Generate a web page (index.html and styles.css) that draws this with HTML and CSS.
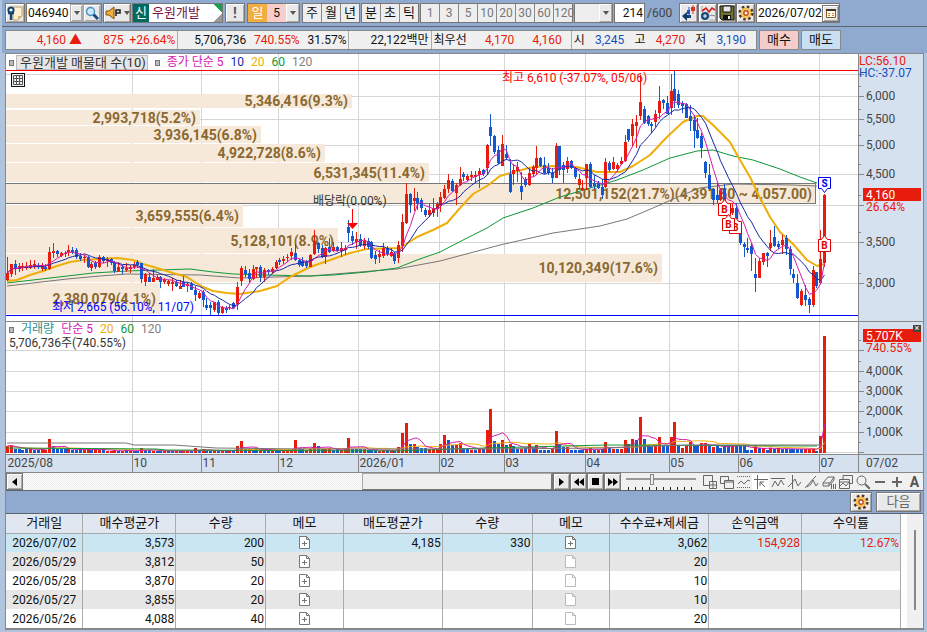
FILE: index.html
```html
<!DOCTYPE html>
<html lang="ko">
<head>
    <meta charset="UTF-8">
    <meta name="viewport" content="width=device-width,initial-scale=1" />
    <title>우원개발 차트</title>
    <link rel="stylesheet" href="styles.css">
</head>
<body>
<div class="top">
    <div class="toolbar">
        <button class="btn" type="button" aria-label="고정">
            <svg width="16" height="16" viewBox="0 0 16 16"><path d="M6 2h9v9l-4 4H6z" fill="#fff0cf" stroke="#b9a06a"/><path d="M15 11h-4v4z" fill="#d8b870"/><circle cx="4" cy="5" r="2.6" fill="#fff" stroke="#12456f" stroke-width="2"/><path d="M1 8l6 0M4 8v7" stroke="#12456f" stroke-width="2.4"/></svg>
        </button>
        <div class="code">
            <input type="text" value="046940" aria-label="종목코드">
            <button class="btn drop" type="button" aria-label="종목 목록"><i class="arrow"></i></button>
            <button class="btn find" type="button" aria-label="종목 검색">
                <svg width="14" height="14" viewBox="0 0 14 14"><path d="M8 8l5 5" stroke="#174a80" stroke-width="3"/><circle cx="5.5" cy="5.5" r="4" fill="#cdeafa" stroke="#4a8fc4" stroke-width="1.4"/></svg>
            </button>
        </div>
        <button class="btn sound" type="button" aria-label="소리">
            <svg width="17" height="14" viewBox="0 0 17 14"><path d="M1 5h3l5-4v12l-5-4H1z" fill="#f0b030" stroke="#8a4a10"/><path d="M11 10V4h4v3h-4" fill="none" stroke="#222" stroke-width="1.6"/></svg>
            <i class="arrow"></i>
        </button>
        <div class="stock"><span class="new">신</span><span class="name">우원개발</span></div>
        <button class="btn mark" type="button">!</button>
        <div class="period">
            <button class="day" type="button">일</button>
            <select aria-label="주기"><option>5</option></select>
            <i class="box"><i class="arrow"></i></i>
        </div>
        <div class="group first">
            <button type="button">주</button><button type="button">월</button><button type="button">년</button>
        </div>
        <div class="group">
            <button type="button">분</button><button type="button">초</button><button type="button">틱</button>
        </div>
        <div class="group off">
            <button type="button">1</button><button type="button">3</button><button type="button">5</button><button type="button">10</button><button type="button">20</button><button type="button">30</button><button type="button">60</button><button type="button">120</button>
        </div>
        <div class="period empty">
            <select aria-label="사용자 주기"><option></option></select>
            <i class="box"><i class="arrow"></i></i>
        </div>
        <label class="count"><input type="text" value="214"><span>/600</span></label>
        <div class="tools">
            <button class="btn" type="button" aria-label="캔들">
                <svg width="16" height="16" viewBox="0 0 16 16"><path d="M1 11l5-4v3h4v3H6v3z" fill="#123c66"/><path d="M8 2v10" stroke="#2454c0"/><path d="M6 5h3v4H6z" fill="#2454c0"/><path d="M12 0v9" stroke="#e03020"/><path d="M10 2h4v4h-4z" fill="#e03020"/></svg>
            </button>
            <button class="btn" type="button" aria-label="지표">
                <svg width="16" height="16" viewBox="0 0 16 16"><path d="M2 1v6M15 15H9" stroke="#aaa"/><path d="M2 6l4-3 3 4 3-4 3 2" fill="none" stroke="#d02020" stroke-width="1.6"/><path d="M8 12l3-2 4 1" fill="none" stroke="#789"/><circle cx="5" cy="11" r="4" fill="#174a80"/><path d="M3 11h4M5 9v4" stroke="#fff"/></svg>
            </button>
            <button class="btn" type="button" aria-label="저장">
                <svg width="16" height="16" viewBox="0 0 16 16"><path d="M1 1h14v14H3l-2-2z" fill="#6e7430" stroke="#111"/><path d="M4 1h8v6H4z" fill="#e8e8e8" stroke="#111"/><path d="M4 10h8v5H4z" fill="#111"/><path d="M9 11h2v3H9z" fill="#eee"/></svg>
            </button>
            <button class="btn" type="button" aria-label="설정">
                <svg width="16" height="16" viewBox="0 0 16 16"><circle cx="8" cy="8" r="6.3" fill="none" stroke="#4a3420" stroke-width="2.6" stroke-dasharray="2.5 2.45"/><circle cx="8" cy="8" r="5.4" fill="#f5b942"/><circle cx="8" cy="8" r="3.8" fill="#f9d888"/><circle cx="8" cy="8" r="2.2" fill="#fff" stroke="#c04a18" stroke-width="1.4"/></svg>
            </button>
        </div>
        <div class="date">
            <input type="text" value="2026/07/02" aria-label="날짜">
            <button class="btn" type="button" aria-label="달력">
                <svg width="10" height="9" viewBox="0 0 10 9"><path d="M.5.5h9v8h-9z" fill="#fff" stroke="#8a5a18"/><path d="M0 1h10" stroke="#4a3420" stroke-width="2"/><path d="M2 4.500h2M6 4.500h2M2 6.500h2M6 6.500h2" stroke="#e07818"/></svg>
            </button>
        </div>
    </div>
    <div class="quote">
        <div class="cells">
            <div class="cell price"><span class="up now">4,160 <b>▲</b></span><span class="up">875</span><span class="up">+26.64%</span></div>
            <div class="cell volume"><span>5,706,736</span><span class="up">740.55%</span><span>31.57%</span></div>
            <div class="cell money"><span>22,122백만</span></div>
            <div class="cell best"><span>최우선</span><span class="up">4,170</span><span class="up">4,160</span></div>
            <div class="cell range"><span>시</span><span class="down">3,245</span><span>고</span><span class="up">4,270</span><span>저</span><span class="down">3,190</span></div>
        </div>
        <button class="buy" type="button">매수</button>
        <button class="sell" type="button">매도</button>
    </div>
</div>

<div class="main">
    <div class="chart" id="chart">
        <svg id="plot" height="418"></svg>
        <div class="legend price-legend">
            <i class="dot"></i><span class="picked">우원개발 매물대 수(10)</span>
            <i class="dot"></i><span class="m5">종가 단순 5</span><span class="m10">10</span><span class="m20">20</span><span class="m60">60</span><span class="m120">120</span>
        </div>
        <button class="grid-btn" type="button" aria-label="표 보기">
            <svg width="10" height="10" viewBox="0 0 10 10"><path d="M.5.5h9v9h-9zM.5 3.500h9M.5 6.500h9M3.500 .5v9M6.500 .5v9" fill="none" stroke="#555"/></svg>
        </button>
        <div class="legend volume-legend">
            <i class="dot"></i><span class="vol">거래량</span><span class="m5">단순 5</span><span class="m20">20</span><span class="m60">60</span><span class="m120">120</span>
        </div>
        <div class="legend volume-now">5,706,736주(740.55%)</div>
        <div class="axis-top"><span class="up">LC:56.10</span><span class="down">HC:-37.07</span></div>
        <button class="close" type="button" aria-label="닫기">×</button>
    </div>

    <div class="scroll">
        <button class="btn" type="button" aria-label="왼쪽"><svg width="5" height="8" viewBox="0 0 5 8"><path d="M5 0v8L0 4z"/></svg></button>
        <div class="track"><div class="thumb"></div></div>
        <button class="btn" type="button" aria-label="오른쪽"><svg width="5" height="8" viewBox="0 0 5 8"><path d="M0 0v8l5-4z"/></svg></button>
        <button class="btn" type="button" aria-label="뒤로"><svg width="10" height="8" viewBox="0 0 10 8"><path d="M5 0v8L0 4zM10 0v8L5 4z"/></svg></button>
        <button class="btn" type="button" aria-label="정지"><svg width="7" height="7" viewBox="0 0 7 7"><path d="M0 0h7v7H0z"/></svg></button>
        <button class="btn" type="button" aria-label="앞으로"><svg width="10" height="8" viewBox="0 0 10 8"><path d="M0 0v8l5-4zM5 0v8l5-4z"/></svg></button>
        <input class="zoom" type="range" min="0" max="100" value="37" aria-label="확대">
        <div class="draw">
            <button type="button" aria-label="새 창"><svg viewBox="0 0 14 14"><path d="M7 10.500H.5V.5h9v6M6.500 6.500h7v7h-7zM6.500 10h7M10 6.500v7"/></svg></button>
            <button type="button" aria-label="창 복사"><svg viewBox="0 0 14 14"><path d="M4 8.500H.5v-7h8V5M4.500 5.500h9v8h-9zM4.500 7h9"/></svg></button>
            <button type="button" aria-label="구간"><svg viewBox="0 0 14 14"><path d="M0 1.500h14M0 12.500h14" stroke-dasharray="1 1"/><path d="M1 9l3-3 3 3 4-4 2 1"/></svg></button>
            <button class="on" type="button" aria-label="십자선"><svg viewBox="0 0 14 14"><path d="M0 4.500h14M3.500 0v14M6 7l5 5M6 11V7h4"/></svg></button>
            <button type="button" aria-label="수평선"><svg viewBox="0 0 14 14"><path d="M0 3.500h14M1 12l3-6 3 5 3-6 3 5"/></svg></button>
            <button type="button" aria-label="수직선"><svg viewBox="0 0 14 14"><path d="M4.500 0v14M0 12l4-4 3-4 3 7 3-4"/></svg></button>
            <button type="button" aria-label="추세선"><svg viewBox="0 0 14 14"><path d="M0 13L11 1M2 12l4-3 2-4 3 6 2-3" /></svg></button>
            <button type="button" aria-label="지우개"><svg viewBox="0 0 14 14"><path d="M1 8l5-6h6l-4 6zM1 8v3h6V8M7 11l5-6V2M9.500 9v5M11.500 9v5M13.500 9v5"/></svg></button>
            <button type="button" aria-label="차트 복사"><svg viewBox="0 0 14 14"><path d="M4 4V.5h9.500v8H11M.5 4.500h10v9H.5zM1 11l3-3 3 3 3-4M1 7h9"/></svg></button>
            <button type="button" aria-label="돋보기"><svg viewBox="0 0 14 14"><circle cx="5.500" cy="5.500" r="4.500"/><path d="M9 9l5 5" stroke-width="2"/></svg></button>
            <button class="thick" type="button" aria-label="축소"><svg viewBox="0 0 14 14"><path d="M2 7h10"/></svg></button>
            <button class="thick" type="button" aria-label="확대"><svg viewBox="0 0 14 14"><path d="M2 7h10M7 2v10"/></svg></button>
            <button class="letter" type="button">A</button>
        </div>
    </div>

    <div class="bar">
        <button class="btn" type="button" aria-label="설정">
            <svg width="16" height="16" viewBox="0 0 16 16"><circle cx="8" cy="8" r="6.3" fill="none" stroke="#4a3420" stroke-width="2.6" stroke-dasharray="2.5 2.45"/><circle cx="8" cy="8" r="5.4" fill="#f5b942"/><circle cx="8" cy="8" r="3.8" fill="#f9d888"/><circle cx="8" cy="8" r="2.2" fill="#fff" stroke="#c04a18" stroke-width="1.4"/></svg>
        </button>
        <button class="btn next" type="button">다음</button>
    </div>

    <div class="trades">
        <table>
            <colgroup>
                <col class="c-date"><col class="c-mid"><col class="c-qty"><col class="c-memo"><col class="c-wide"><col class="c-qty"><col class="c-memo"><col class="c-wide"><col class="c-mid"><col class="c-wide">
            </colgroup>
            <thead>
                <tr><th>거래일</th><th>매수평균가</th><th>수량</th><th>메모</th><th>매도평균가</th><th>수량</th><th>메모</th><th>수수료+제세금</th><th>손익금액</th><th>수익률</th></tr>
            </thead>
            <tbody>
                <tr class="sel"><td>2026/07/02</td><td>3,573</td><td>200</td><td class="memo add"></td><td>4,185</td><td>330</td><td class="memo add"></td><td>3,062</td><td class="up">154,928</td><td class="up">12.67%</td></tr>
                <tr><td>2026/05/29</td><td>3,812</td><td>50</td><td class="memo add"></td><td></td><td></td><td class="memo"></td><td>20</td><td></td><td></td></tr>
                <tr><td>2026/05/28</td><td>3,870</td><td>20</td><td class="memo add"></td><td></td><td></td><td class="memo"></td><td>10</td><td></td><td></td></tr>
                <tr><td>2026/05/27</td><td>3,855</td><td>20</td><td class="memo add"></td><td></td><td></td><td class="memo"></td><td>10</td><td></td><td></td></tr>
                <tr><td>2026/05/26</td><td>4,088</td><td>40</td><td class="memo add"></td><td></td><td></td><td class="memo"></td><td>20</td><td></td><td></td></tr>
            </tbody>
        </table>
        <div class="side"><div class="handle"></div></div>
    </div>
</div>
<script src="chart.js"></script>
</body>
</html>
```

FILE: styles.css
```css
*{
    box-sizing: border-box;
}
body{
    margin: 0;
    background-color: #b1c4de;
    font-family: Roboto, "Noto Sans CJK KR", sans-serif;
    font-size: 12px;
    line-height: 16px;
    color: #111;
}
button, input, select{
    font-family: inherit;
    font-size: 12px;
    line-height: 16px;
    color: inherit;
    margin: 0;
    padding: 0;
    border: 0;
    border-radius: 0;
    min-width: 0;
}
select{
    appearance: none;
    text-align: center;
    text-align-last: center;
}
.up{
    color: #e81c0c;
}
.down{
    color: #1450c0;
}
.top{
    margin-left: 2px;
    background-color: #90a9cf;
}
.toolbar{
    display: flex;
    align-items: center;
    height: 27px;
    padding: 0 3px;
    gap: 1px;
    border-bottom: 1px solid #5c6470;
}
.toolbar > *{
    flex: none;
    height: 20px;
}
.btn{
    display: flex;
    align-items: center;
    justify-content: center;
    width: 20px;
    height: 20px;
    background-color: #e9e9e9;
    border: 1px solid #777;
    box-shadow: inset 1px 1px #fff, inset -1px -1px #aaa;
}
.arrow{
    border: 3px solid transparent;
    border-top: 4px solid #555;
    border-bottom: 0;
}
.code, .date, .stock, .period{
    display: flex;
    align-items: center;
    border: 1px solid #777;
    background-color: #fff;
}
.code{
    width: 76px;
}
.code input{
    width: 43px;
    padding-left: 1px;
}
.code .btn{
    height: 18px;
    border-color: #aaa;
}
.code .drop{
    width: 13px;
}
.code .find{
    width: 18px;
}
.sound{
    width: 28px;
    gap: 2px;
}
.stock{
    width: 91px;
    gap: 3px;
    background: linear-gradient(45deg, transparent 50%, #18a050 50%) top right / 8px 8px no-repeat, linear-gradient(135deg, transparent 50%, #999 50%) bottom right / 8px 8px no-repeat, #fff;
}
.stock .new{
    width: 16px;
    font-size: 13px;
    line-height: 18px;
    text-align: center;
    color: #fff;
    background-color: #006a60;
}
.stock .name{
    font-size: 13px;
    color: #7a1040;
}
.mark{
    font-weight: bold;
    font-size: 14px;
    color: #555;
    margin: 0 1px;
}
.period{
    width: 53px;
}
.period .day{
    width: 19px;
    height: 18px;
    color: #fff;
    background-color: #f2ae3e;
    font-size: 13px;
}
.period select{
    flex: 1;
    height: 18px;
    background-color: #f6cdca;
}
.period .box{
    display: flex;
    align-items: center;
    justify-content: center;
    width: 13px;
    height: 18px;
    background-color: #e9e9e9;
    border: 1px solid #aaa;
    border-top-color: #fff;
    border-left-color: #fff;
}
.period.empty{
    width: 39px;
    color: #999;
}
.period.empty select{
    background-color: #eee;
}
.group{
    display: flex;
    width: 58px;
    border: 1px solid #777;
}
.group.first{
    margin-left: 1px;
}
.group.off{
    width: 153px;
}
.group button{
    flex: 1;
    background-color: #eee;
    border-right: 1px solid #888;
    font-size: 13px;
}
.group button:last-child{
    border-right: 0;
}
.group.off button{
    color: #777;
    font-size: 12px;
}
.count{
    display: flex;
    align-items: center;
    width: 62px;
    gap: 2px;
}
.count input{
    width: 31px;
    height: 20px;
    border: 1px solid #777;
    text-align: right;
    padding-right: 1px;
}
.count span{
    color: #444;
}
.tools{
    display: flex;
    margin-left: 2px;
}
.tools .btn{
    width: 19px;
}
.date{
    width: 84px;
    justify-content: space-between;
}
.date input{
    width: 65px;
    padding-left: 1px;
}
.date .btn{
    width: 17px;
    height: 17px;
}
.quote{
    display: flex;
    gap: 2px;
    padding: 3px 86px 3px 3px;
    font-size: 12px;
}
.cells{
    flex: 1;
    display: grid;
    grid-template-columns: 172fr 171fr 82fr 140fr 184fr;
    height: 20px;
    background-color: #f0f0f0;
    border: 1px solid #888;
}
.cell{
    display: flex;
    align-items: center;
    justify-content: space-between;
    padding: 0 2px;
    border-right: 1px solid #aaa;
    white-space: nowrap;
}
.cell:last-child{
    border-right: 0;
}
.price{
    gap: 4px;
}
.price .now{
    width: 74px;
    text-align: right;
    margin-right: auto;
}
.price .now b{
    font-size: 13px;
}
.price span:nth-child(2){
    margin-right: 2px;
}
.volume{
    padding-left: 16px;
}
.money{
    justify-content: flex-end;
}
.best{
    padding-right: 9px;
}
.range{
    padding-right: 10px;
}
.quote button{
    width: 40px;
    height: 20px;
    border: 1px solid #888;
    font-size: 13px;
}
.buy{
    background-color: #f4cdca;
}
.sell{
    background-color: #c8dff4;
}
.main{
    margin: 0 3px 3px 5px;
    border: 1px solid #888;
    border-bottom: 2px solid #888;
}
.chart{
    position: relative;
    background-color: #fff;
}
.chart svg{
    display: block;
}
#plot{
    width: 100%;
    font-size: 12px;
}
.legend{
    position: absolute;
    left: 3px;
    display: flex;
    align-items: center;
    gap: 7px;
    font-size: 12px;
    line-height: 13px;
    color: #333;
    white-space: nowrap;
}
.price-legend{
    top: 1px;
}
.volume-legend{
    top: 269px;
}
.volume-now{
    top: 283px;
}
.dot{
    width: 5px;
    height: 6px;
    background-color: #bbb;
    border: 1px solid #777;
}
.picked{
    font-size: 13px;
    padding: 0 1px 0 3px;
    margin-left: -5px;
    background-color: #e6e6e6;
    border: 1px solid #bbb;
}
.m5{ color: #d818b0; }
.m10{ color: #1428a8; }
.m20{ color: #f0b000; }
.m60{ color: #109838; }
.m120{ color: #808080; }
.vol{ color: #309090; }
.grid-btn{
    position: absolute;
    left: 5px;
    top: 19px;
    width: 14px;
    height: 14px;
    padding: 1px;
    background-color: #f0f0f0;
    border: 1px solid #111;
}
.axis-top{
    position: absolute;
    right: 0;
    top: 1px;
    width: 64px;
    display: flex;
    flex-direction: column;
    line-height: 12px;
}
.close{
    position: absolute;
    right: 2px;
    top: 271px;
    width: 8px;
    height: 7px;
    font-size: 9px;
    line-height: 7px;
    color: #fff;
    background-color: #444;
}
.scroll{
    display: flex;
    align-items: center;
    height: 18px;
    background-color: #f0f0f0;
    border-top: 1px solid #888;
}
.scroll .btn{
    flex: none;
    width: 17px;
    height: 17px;
}
.track{
    flex: 1;
    display: flex;
    justify-content: flex-end;
    height: 17px;
    background: repeating-conic-gradient(#fff 0 25%, #eaeaea 0 50%) 0 0 / 2px 2px;
}
.thumb{
    width: 36%;
    height: 17px;
    background-color: #efefef;
    border: 1px solid #aaa;
    border-right: 2px solid #777;
    border-bottom-color: #777;
}
.zoom{
    appearance: none;
    flex: none;
    width: 70px;
    height: 17px;
    margin: 0 5px;
    background: linear-gradient(#999, #999) 0 5px / 100% 2px no-repeat, repeating-linear-gradient(90deg, transparent 0 2px, #222 2px 3px, transparent 3px 7px) 0 14px / 100% 3px no-repeat;
}
.zoom::-webkit-slider-thumb{
    appearance: none;
    width: 4px;
    height: 11px;
    margin-bottom: 5px;
    background-color: #eee;
    border: 1px solid #888;
}
.draw{
    display: flex;
    flex: none;
    width: 222px;
}
.draw button{
    display: flex;
    align-items: center;
    justify-content: center;
    flex: 1;
    height: 16px;
    background-color: transparent;
}
.draw .on{
    background-color: #fff;
}
.draw svg{
    width: 14px;
    height: 14px;
    fill: none;
    stroke: #666;
}
.draw .thick svg{
    stroke-width: 2;
}
.draw .letter{
    font-size: 14px;
    font-weight: bold;
    color: #555;
}
.bar{
    display: flex;
    align-items: center;
    justify-content: flex-end;
    gap: 4px;
    height: 24px;
    padding-right: 2px;
    background-color: #90a9cf;
    border-top: 1px solid #5c6470;
    border-bottom: 1px solid #5c6470;
}
.bar .btn{
    width: 22px;
}
.bar .next{
    width: 45px;
    font-size: 13px;
    color: #666;
}
.trades{
    display: flex;
    background-color: #fff;
}
table{
    flex: 1;
    table-layout: fixed;
    border-collapse: collapse;
}
.c-date{ width: 77px; }
.c-mid{ width: 93px; }
.c-qty{ width: 90px; }
.c-memo{ width: 78px; }
.c-wide{ width: 99px; }
th, td{
    height: 19px;
    padding: 0 1px;
    line-height: 16px;
    border-right: 1px solid #aaa;
    text-align: right;
}
th{
    font-weight: normal;
    font-size: 13px;
    text-align: center;
    background-color: #e1e7f0;
    border-bottom: 1px solid #aaa;
}
td:first-child{
    text-align: center;
}
tbody tr:nth-child(even){
    background-color: #e6e6e6;
}
tbody .sel{
    background-color: #cbe6f3;
}
.memo svg{
    display: block;
    margin: 0 auto;
}
.side{
    flex: none;
    width: 22px;
    padding: 16px 7px;
    background: linear-gradient(90deg, #fff 6px, #f0f0f0 6px);
}
.handle{
    width: 2px;
    height: 80px;
    margin-left: 6px;
    background-color: #888;
}
```

FILE: chart.js
```js
var RED = "#e81c0c";
var BLUE = "#1458d0";
var AXIS = 65;
var BASE = 852;   // plot width the x values below are written for
var svg = document.getElementById("plot");

// up(1) / down(0), body top, body bottom, high, low
var candles = [
    [1,219,226,203,227],[1,210,220,210,223],[0,210,215,206,221],[1,212,215,209,218],[1,212,214,209,217],[1,212,214,208,216],
    [1,211,214,206,215],[1,210,213,206,215],[0,211,213,209,215],[1,211,215,209,217],[0,213,215,210,217],[1,198,215,193,216],
    [1,197,199,189,204],[0,197,200,196,203],[1,199,202,198,203],[1,199,200,197,203],[1,196,198,191,202],[0,196,198,193,200],
    [0,196,203,194,205],[0,202,205,199,207],[1,203,204,201,209],[0,203,213,202,214],[1,210,214,208,217],[0,209,213,207,215],
    [1,203,213,201,214],[0,203,207,202,209],[1,205,207,203,213],[0,205,209,204,211],[0,208,217,207,219],[1,213,217,208,218],
    [0,213,215,211,220],[1,214,216,209,218],[1,213,215,211,219],[1,211,213,208,215],[0,208,211,206,214],[0,209,225,209,229],
    [1,220,228,219,232],[0,223,228,219,228],[1,224,228,215,228],[1,223,226,220,226],[0,223,228,222,234],[1,226,228,224,230],
    [1,227,230,226,232],[1,228,230,224,237],[0,228,232,226,233],[1,232,235,226,235],[0,228,233,222,233],[1,230,232,228,238],
    [0,230,236,228,236],[0,236,241,232,247],[1,239,244,237,245],[0,238,246,236,253],[0,251,254,244,256],[0,251,254,248,261],
    [1,248,256,248,258],[0,248,259,246,261],[1,253,259,252,260],[0,254,256,252,259],[1,253,254,251,256],[0,249,254,248,255],
    [1,233,250,228,256],[1,214,227,212,232],[0,216,220,212,223],[0,219,225,215,229],[1,215,225,211,226],[1,213,215,213,224],
    [0,213,223,211,228],[1,216,223,214,228],[0,216,218,215,221],[1,215,218,213,220],[1,208,214,206,215],[0,206,208,204,211],
    [1,205,207,202,210],[1,203,204,200,208],[1,198,202,194,206],[0,199,206,190,207],[0,206,211,205,213],[0,207,212,203,213],
    [0,208,212,206,214],[1,201,213,200,213],[1,187,200,176,201],[0,189,195,188,199],[0,194,203,191,204],[1,194,203,193,210],
    [0,193,198,184,199],[1,193,197,188,198],[0,193,197,192,198],[1,194,197,188,203],[1,194,196,191,201],[0,173,179,166,188],
    [0,182,187,177,191],[1,185,188,178,195],[0,185,191,180,193],[1,187,192,184,195],[0,187,193,184,195],[0,188,204,187,205],
    [0,201,205,197,210],[1,200,203,196,209],[1,194,202,189,204],[0,194,200,192,202],[1,198,202,194,203],[0,200,207,198,210],
    [1,191,204,187,209],[1,168,192,160,198],[1,140,169,129,170],[0,140,151,139,159],[1,144,147,134,157],[0,144,150,138,156],
    [0,146,154,144,158],[0,156,161,154,163],[1,156,161,149,163],[1,154,159,144,163],[1,150,155,148,163],[1,143,151,138,158],
    [1,135,144,131,145],[1,126,135,120,139],[0,127,137,125,138],[1,131,139,129,151],[1,125,131,113,132],[0,120,123,118,127],
    [1,122,126,120,127],[1,121,123,117,127],[1,121,123,117,129],[1,117,121,114,134],[0,116,120,115,122],[1,91,114,90,121],
    [0,73,82,60,92],[0,82,98,81,100],[0,96,109,92,110],[1,90,112,81,112],[0,100,104,91,106],[0,120,138,105,139],
    [1,116,120,110,131],[1,113,117,108,128],[0,132,138,118,146],[0,125,131,123,133],[1,119,131,114,132],[1,113,120,111,123],
    [1,104,114,92,121],[0,104,112,103,113],[0,111,119,103,120],[0,114,119,109,121],[0,119,124,114,129],[1,92,124,89,124],
    [0,92,116,92,121],[0,111,116,108,129],[1,107,115,103,119],[0,107,114,106,115],[0,114,123,113,125],[1,125,131,120,135],
    [1,134,136,126,137],[1,110,124,110,136],[0,110,133,108,134],[0,129,132,121,135],[0,129,134,127,135],[0,133,141,125,145],
    [1,108,133,104,134],[0,109,116,107,118],[1,108,115,103,116],[1,111,115,109,118],[1,107,110,103,111],[1,88,107,81,108],
    [0,75,86,75,88],[1,70,82,65,93],[1,68,72,61,94],[1,48,62,21,66],[0,55,69,52,70],[0,62,70,61,72],
    [0,70,72,68,79],[1,60,68,56,73],[1,47,59,32,65],[0,46,49,45,55],[0,49,60,42,60],[1,37,54,20,61],
    [0,35,47,17,54],[0,40,51,36,54],[0,49,52,47,59],[0,50,64,49,64],[0,62,67,51,77],[0,66,77,61,94],
    [0,76,84,64,85],[0,82,94,79,104],[0,108,119,107,124],[0,121,135,110,136],[0,135,146,134,151],[0,141,146,128,149],
    [1,136,146,134,147],[0,135,148,130,149],[1,153,162,149,168],[1,154,159,149,161],[0,154,165,149,168],[0,178,189,169,191],
    [0,190,193,188,203],[0,194,196,184,199],[0,192,200,189,217],[0,220,224,204,238],[1,207,224,204,224],[1,199,208,199,211],
    [0,199,202,198,213],[1,189,194,176,197],[0,183,192,172,193],[0,190,193,187,195],[1,186,191,181,200],[0,184,195,181,201],
    [0,195,215,192,221],[0,220,224,215,229],[0,229,244,220,245],[1,237,251,235,252],[0,241,246,231,252],[0,245,251,243,259],
    [1,216,251,212,253],[0,218,232,218,234],[1,205,229,176,230],[1,141,209,140,213]
];

// bar heights, negative = blue
var volumes = [
    7,8,-4,-4,-3,-4,5,-3,-3,4,3,14,-7,-4,-4,-4,4,-3,-3,-4,3,4,-3,4,3,-4,2,2,3,-2,2,-3,2,-2,-2,5,-3,-3,2,-2,-2,2,-2,-2,2,-2,2,2,-2,5,-3,4,-2,-2,2,-3,2,-2,3,-2,
    7,12,-4,4,-3,-5,3,-3,-3,2,-2,-3,3,2,3,13,-5,-4,3,4,10,-7,-4,4,5,-3,-4,3,4,15,-4,-4,-4,4,-3,-3,-3,2,3,-3,2,-2,6,20,30,-9,9,-6,-5,-5,4,4,4,9,18,-13,-8,8,10,-5,
    -5,3,-3,4,-4,23,44,-12,-9,13,-8,9,-7,-4,4,-5,9,-5,8,-3,-3,-3,5,22,-9,-6,6,-3,-3,-3,-3,4,5,-3,3,-4,11,-5,4,-4,4,13,-9,14,-13,36,-14,-8,-7,8,16,-7,-7,16,31,-8,5,7,11,-7,
    -7,10,10,-7,6,-7,-5,-7,-7,8,-8,-7,-7,-3,-3,7,-5,5,-3,5,-4,5,-4,-4,-4,-4,-4,-4,4,4,4,-2,17,117
];

var ma20 = [[1,227],[11,226],[24,221],[37,217],[51,212],[64,208],[77,206],[94,205],[111,204],[127,206],[137,210],[151,214],[167,219],[181,223],[187,227],[197,233],[207,237],[221,239],[234,240],[254,237],[271,232],[284,223],[294,218],[304,213],[327,205],[344,199],[361,195],[394,194],[411,183],[427,176],[441,169],[454,154],[467,140],[481,132],[494,122],[511,117],[527,113],[547,112],[571,113],[591,118],[614,118],[627,112],[644,101],[661,83],[677,68],[691,62],[697,62],[707,71],[724,88],[734,106],[744,123],[754,144],[764,163],[774,178],[787,190],[801,206],[811,212],[818,210]];
var ma60 = [[1,229],[44,224],[87,219],[121,217],[154,216],[184,215],[207,218],[227,220],[261,221],[304,222],[327,221],[361,218],[391,214],[411,206],[434,198],[461,184],[481,174],[497,164],[527,154],[554,143],[581,135],[611,126],[637,116],[664,104],[691,97],[707,96],[727,102],[747,106],[774,115],[794,123],[811,129]];
var ma120 = [[1,232],[61,225],[94,222],[121,220],[194,221],[234,224],[304,222],[391,215],[434,207],[494,191],[547,179],[594,172],[621,165],[647,154],[674,142],[694,134],[727,130],[787,131],[811,132]];
var vol60 = [[1,394],[150,395],[160,396],[390,397],[480,394],[600,391],[811,392]];
var vol120 = [[1,389],[120,389],[128,391],[168,391],[210,394],[300,395],[480,395],[600,394],[680,391],[816,391]];

// top, bottom, right edge, label
var bands = [
    [40,54,346,"5,346,416(9.3%)"],[56,71,194,"2,993,718(5.2%)"],[72,89,255,"3,936,145(6.8%)"],[90,108,319,"4,922,728(8.6%)"],
    [109,128,423,"6,531,345(11.4%)"],[129,150,810,"12,501,152(21.7%)(4,391.50 ~ 4,057.00)"],[151,173,237,"3,659,555(6.4%)"],
    [174,199,332,"5,128,101(8.9%)"],[200,228,656,"10,120,349(17.6%)"],[229,260,154,"2,380,079(4.1%)"]
];
var months = [[0,"2025/08"],[126,"10"],[195,"11"],[272,"12"],[352,"2026/01"],[433,"02"],[498,"03"],[579,"04"],[663,"05"],[732,"06"],[813,"07"]];
var prices = [[20],[42,"6,000"],[65,"5,500"],[91,"5,000"],[120,"4,500"],[151],[188,"3,500"],[229,"3,000"],[296],[317,"4,000K"],[337,"3,000K"],[357,"2,000K"],[378,"1,000K"],[398]];
var halves = [32,55,81,110,141,178,219,286,307,327,347,368,388];

function rect(x, y, w, h, fill, more){
    return '<rect x="' + x + '" y="' + y + '" width="' + w + '" height="' + h + '" fill="' + fill + '" ' + (more || "") + '/>';
}
function line(x1, y1, x2, y2, color){
    return '<path d="M' + x1 + ' ' + y1 + 'L' + x2 + ' ' + y2 + '" stroke="' + color + '"/>';
}
function text(x, y, color, str, more){
    return '<text x="' + x + '" y="' + y + '" fill="' + color + '" ' + (more || "") + '>' + str + '</text>';
}
function poly(points, color, width){
    return '<polyline points="' + points.join(" ") + '" fill="none" stroke="' + color + '" stroke-width="' + width + '" stroke-linejoin="round"/>';
}
function average(values, n){
    return values.map(function(v, i){
        var part = values.slice(Math.max(0, i - n + 1), i + 1);
        return part.reduce(function(a, b){ return a + b; }, 0) / part.length;
    });
}
function badge(x, y, letter){
    return '<path d="M' + (x - 5.5) + ' ' + (y - 0.5) + 'h3l3 -4 3 4h3v12h-12z" fill="#fff" stroke="#e00000"/>' +
        text(x + 0.5, y + 9, "#e00000", letter, 'font-size="10" font-weight="bold" text-anchor="middle"');
}

function draw(){
    var full = svg.clientWidth;
    var w = full - AXIS;
    var k = w / BASE;
    var out = "";
    function px(x){ return Math.round(x * k); }
    function at(i){ return Math.round((1 + i * 3.836) * k); }
    function scaled(points){
        return points.map(function(p){ return px(p[0]) + "," + p[1]; });
    }
    function series(values){
        return values.map(function(v, i){ return (at(i) + 0.5) + "," + v.toFixed(1); });
    }

    out += rect(w, 0, AXIS, 418, "#d6e1f0") + rect(0, 400, full, 18, "#d6e1f0");
    prices.forEach(function(p){
        out += line(0, p[0] + 0.5, w, p[0] + 0.5, "#d6d6d6") + line(w, p[0] + 0.5, w + 6, p[0] + 0.5, "#888");
        if(p[1]){
            out += text(w + 8, p[0] + 4, "#444", p[1]);
        }
    });
    halves.forEach(function(y){
        out += line(w, y + 0.5, w + 3, y + 0.5, "#888");
    });
    months.forEach(function(m, i){
        var x = px(m[0]) + 0.5;
        if(i > 0){
            out += line(x, 0, x, 400, "#d6d6d6") + line(x, 400, x, 418, "#888");
        }
        out += text(x + 1, 413, "#444", m[1]);
    });
    out += text(w + 8, 413, "#444", "07/02");

    bands.forEach(function(b, i){
        if(i == 5){
            out += rect(-0.5, 129.5, px(b[2]), 20, "#f6e9d9", 'stroke="#777"');
        }else{
            out += rect(0, b[0], px(b[2]), b[1] - b[0], "#f6e9d9");
        }
    });
    bands.forEach(function(b){
        out += text(px(b[2]) - 4, Math.round((b[0] + b[1]) / 2) + 5, "#8a6830", b[3], 'font-size="14" font-weight="bold" text-anchor="end"');
    });

    // price
    out += poly(scaled(ma120), "#777", 1) + poly(scaled(ma60), "#109838", 1) + poly(scaled(ma20), "#f0ae08", 2);
    candles.forEach(function(c, i){
        var color = c[0] ? RED : BLUE;
        var x = at(i);
        out += rect(x, c[3], 1, c[4] - c[3], color) + rect(x - 1, c[1], 3, Math.max(1, c[2] - c[1]), color);
    });
    var closes = candles.map(function(c){ return c[0] ? c[1] : c[2]; });
    out += poly(series(average(closes, 10)), "#1428a8", 1) + poly(series(average(closes, 5)), "#d818b0", 1);
    out += line(0, 16.5, w, 16.5, "#f00") + line(0, 261.5, w, 261.5, "#00f");
    out += text(px(496), 28, "#f00", "최고 6,610 (-37.07%, 05/06)");
    out += text(px(46), 257, "#00f", "최저 2,665 (56.10%, 11/07)");
    out += text(px(307), 151, "#333", "배당락(0.00%)");
    out += line(px(346) + 0.5, 155, px(346) + 0.5, 170, "#f00") + '<path d="M' + (px(346) - 5) + ' 169h11l-5.500 6z" fill="#f00"/>';
    out += badge(px(729), 168, "B") + badge(px(718), 150, "B") + badge(px(722), 165, "B") + badge(px(818), 186, "B");
    out += '<path d="M' + (px(818) - 5.5) + ' 123.500h12v11h-3l-3 4-3-4h-3z" fill="#fff" stroke="#0000f0"/>';
    out += text(px(818) + 0.5, 133, "#0000f0", "S", 'font-size="10" font-weight="bold" text-anchor="middle"');

    // volume
    volumes.forEach(function(v, i){
        var h = Math.abs(v);
        out += rect(at(i) - 1, 399 - h, 3, h, v > 0 ? RED : BLUE);
    });
    var sizes = volumes.map(Math.abs);
    function level(v){ return 399 - v; }
    out += poly(series(average(sizes, 20).map(level)), "#f0ae08", 1);
    out += poly(series(average(sizes, 5).map(level)), "#d818b0", 1);
    out += poly(scaled(vol60), "#109838", 1) + poly(scaled(vol120), "#777", 1);

    out += line(0, 267.5, full, 267.5, "#888") + line(0, 400.5, full, 400.5, "#888") + line(w + 0.5, 0, w + 0.5, 418, "#888");
    out += rect(w + 5, 134, 58, 13, RED) + text(w + 8, 145, "#fff", "4,160") + text(w + 8, 157, RED, "26.64%");
    out += rect(w + 5, 275, 58, 13, RED) + text(w + 8, 286, "#fff", "5,707K") + text(w + 8, 298, RED, "740.55%");
    svg.innerHTML = out;
}

// memo icons of the trade table
var memos = document.querySelectorAll(".memo");
for(var i = 0; i < memos.length; i++){
    var add = memos[i].classList.contains("add");
    memos[i].innerHTML = '<svg width="11" height="13" viewBox="0 0 11 13"><path d="M.5.5h7l3 3v9H.5zM7.500 .5v3h3' + (add ? 'M3 7.500h5M5.500 5v5' : '') + '" fill="#fff" stroke="' + (add ? "#777" : "#bbb") + '"/></svg>';
}

draw();
window.addEventListener("resize", draw);
```
